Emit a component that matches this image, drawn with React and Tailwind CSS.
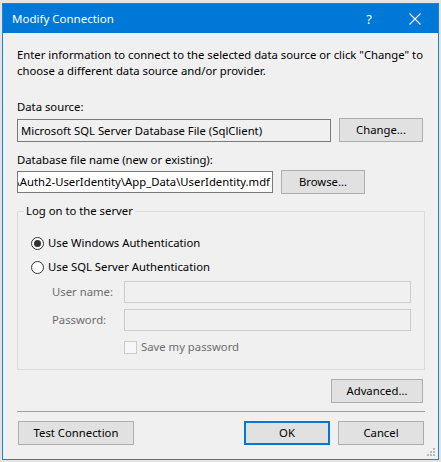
import React from "react";

const font = { fontFamily: '"Noto Sans", "Liberation Sans", sans-serif' };

function Btn({ children, w, primary }) {
  return (
    <div
      className={
        "h-[24px] flex items-center justify-center bg-[#e1e1e1] text-black shrink-0 " +
        (primary ? "border-2 border-[#0078d7]" : "border border-[#adadad]")
      }
      style={{ width: w }}
    >
      {children}
    </div>
  );
}

export default function App() {
  return (
    <div
      className="w-[441px] h-[462px] bg-[#e4e4e4] pt-[3px] pl-[2px] overflow-hidden text-[11.3px] leading-[16px]"
      style={font}
    >
      <div className="w-[437px] h-[457px] border border-[#1883d7] bg-[#f0f0f0] flex flex-col">
        {/* Title bar */}
        <div className="h-[29px] bg-[#0078d7] flex items-center text-white shrink-0">
          <div className="ml-[9px] text-[11.5px]">Modify Connection</div>
          <div className="ml-auto w-[46px] h-full flex items-center justify-center text-[13px]">?</div>
          <div className="w-[46px] h-full flex items-center justify-center">
            <svg width="12" height="12" viewBox="0 0 12 12">
              <path d="M0.5 0.5 L11.5 11.5 M11.5 0.5 L0.5 11.5" stroke="white" strokeWidth="1.1" fill="none" />
            </svg>
          </div>
        </div>

        {/* Content */}
        <div className="pl-[14px] pr-[14px] flex flex-col text-black">
          <div className="mt-[14px] leading-[16px] whitespace-nowrap">
            Enter information to connect to the selected data source or click "Change" to
            <br />
            choose a different data source and/or provider.
          </div>

          <div className="mt-[20px]">Data source:</div>
          <div className="mt-[3px] flex items-start gap-[8px]">
            <div className="mt-[1px] w-[314px] h-[23px] border border-[#7a7a7a] bg-[#f0f0f0] flex items-center px-[3px] whitespace-nowrap overflow-hidden">
              Microsoft SQL Server Database File (SqlClient)
            </div>
            <Btn w={84}>Change...</Btn>
          </div>

          <div className="mt-[10px]">Database file name (new or existing):</div>
          <div className="mt-[2px] flex items-start gap-[8px]">
            <div className="mt-[1px] w-[256px] h-[22px] border border-[#7a7a7a] bg-white flex items-center justify-end pr-[2px] whitespace-nowrap overflow-hidden">
              C:\Projects\Auth2-UserIdentity\App_Data\UserIdentity.mdf
            </div>
            <Btn w={84}>Browse...</Btn>
          </div>

          {/* Group box */}
          <div className="mt-[17px] w-[408px] h-[159px] border border-[#dcdcdc] flex flex-col">
            <div className="-mt-[9px] ml-[6px] px-[2px] w-fit bg-[#f0f0f0]">Log on to the server</div>

            <div className="mt-[16px] ml-[13px] flex items-center h-[16px]">
              <div className="w-[13px] h-[13px] rounded-full border border-[#333333] bg-white flex items-center justify-center">
                <div className="w-[7px] h-[7px] rounded-full bg-[#333333]" />
              </div>
              <div className="ml-[4px]">Use Windows Authentication</div>
            </div>
            <div className="mt-[8px] ml-[13px] flex items-center h-[16px]">
              <div className="w-[13px] h-[13px] rounded-full border border-[#333333] bg-white" />
              <div className="ml-[4px]">Use SQL Server Authentication</div>
            </div>

            <div className="mt-[6px] ml-[34px] flex items-center">
              <div className="w-[72px] text-[#6d6d6d]">User name:</div>
              <div className="w-[287px] h-[22px] border border-[#cccccc] bg-[#f0f0f0]" />
            </div>
            <div className="mt-[6px] ml-[34px] flex items-center">
              <div className="w-[72px] text-[#6d6d6d]">Password:</div>
              <div className="w-[287px] h-[22px] border border-[#cccccc] bg-[#f0f0f0]" />
            </div>
            <div className="mt-[8px] ml-[106px] flex items-center h-[16px]">
              <div className="w-[13px] h-[13px] border border-[#cccccc] bg-[#f7f7f7]" />
              <div className="ml-[4px] text-[#6d6d6d]">Save my password</div>
            </div>
          </div>

          <div className="mt-[9px] flex justify-end pr-[1px]">
            <Btn w={92}>Advanced...</Btn>
          </div>

          <div className="mt-[8px] h-px w-[408px] bg-[#a0a0a0]" />

          <div className="mt-[9px] flex items-start">
            <div className="ml-[1px]">
              <Btn w={116}>Test Connection</Btn>
            </div>
            <div className="ml-auto flex gap-[8px]">
              <Btn w={86} primary>
                OK
              </Btn>
              <Btn w={86}>Cancel</Btn>
            </div>
          </div>
        </div>

        {/* Resize grip */}
        <div className="mt-auto mb-[2px] mr-[2px] self-end">
          <svg width="9" height="9" viewBox="0 0 9 9">
            <rect x="6" y="0" width="2" height="2" fill="#b8b8b8" />
            <rect x="3" y="3" width="2" height="2" fill="#b8b8b8" />
            <rect x="6" y="3" width="2" height="2" fill="#b8b8b8" />
            <rect x="0" y="6" width="2" height="2" fill="#b8b8b8" />
            <rect x="3" y="6" width="2" height="2" fill="#b8b8b8" />
            <rect x="6" y="6" width="2" height="2" fill="#b8b8b8" />
          </svg>
        </div>
      </div>
    </div>
  );
}
